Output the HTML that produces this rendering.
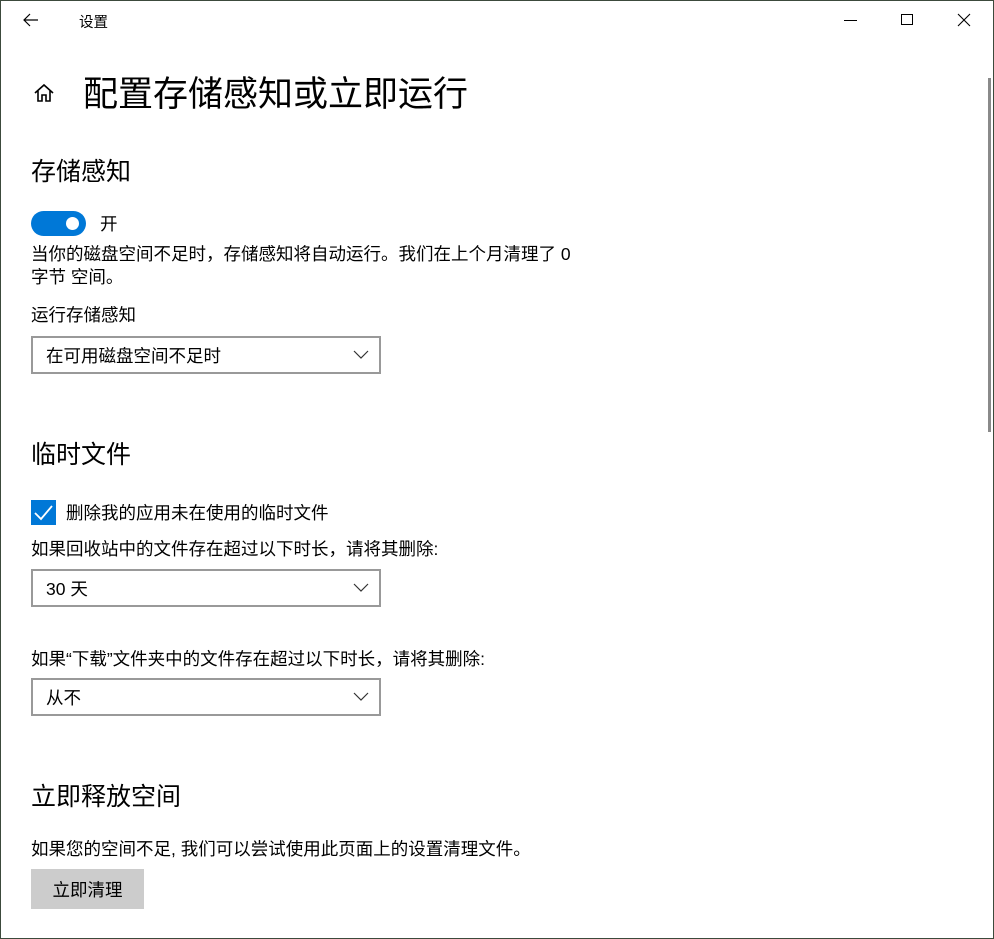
<!DOCTYPE html>
<html><head><meta charset="utf-8"><style>
*{margin:0;padding:0;box-sizing:border-box}
body{width:994px;height:939px;background:#fff;position:relative;overflow:hidden;font-family:"Liberation Sans","Noto Sans CJK SC",sans-serif;color:#000}
.frame{position:absolute;inset:0;border:1px solid #3c4a3c;pointer-events:none}
.a{position:absolute;white-space:nowrap}
.h{font-size:25px}
.t{font-size:17.5px}
.dd{position:absolute;left:31px;width:350px;height:38px;border:2px solid #999;font-size:17.5px;padding:5px 0 0 13px}
.dd svg{position:absolute;right:10px;top:12px}
</style></head><body>
<div class="frame"></div>
<svg class="a" style="left:22px;top:12px" width="18" height="16" viewBox="0 0 18 16"><path d="M16 8H2M8 2L2 8l6 6" fill="none" stroke="#000" stroke-width="1.2"/></svg>
<div class="a" style="left:79px;top:11px;font-size:14.5px">设置</div>
<div class="a" style="left:844px;top:20px;width:13px;height:1px;background:#000"></div>
<div class="a" style="left:901px;top:14px;width:12px;height:11px;border:1px solid #000"></div>
<svg class="a" style="left:957px;top:13px" width="14" height="14" viewBox="0 0 14 14"><path d="M1 1L13 13M13 1L1 13" stroke="#000" stroke-width="1.1"/></svg>
<svg class="a" style="left:33px;top:82px" width="22" height="22" viewBox="0 0 22 22"><path d="M2 11L11 3l9 8M5 9v10h4v-6h4v6h4V9" fill="none" stroke="#000" stroke-width="1.6"/></svg>
<div class="a" style="left:83px;top:66px;font-size:35px">配置存储感知或立即运行</div>
<div class="a h" style="left:31px;top:152px">存储感知</div>
<div class="a" style="left:31px;top:211px;width:55px;height:25px;border-radius:13px;background:#0078d7"></div>
<div class="a" style="left:66px;top:217px;width:13px;height:13px;border-radius:50%;background:#fff"></div>
<div class="a t" style="left:100px;top:211px">开</div>
<div class="a t" style="left:31px;top:243px;line-height:23px">当你的磁盘空间不足时，存储感知将自动运行。我们在上个月清理了 0<br>字节 空间。</div>
<div class="a t" style="left:31px;top:302px">运行存储感知</div>
<div class="dd" style="top:336px">在可用磁盘空间不足时<svg width="16" height="10" viewBox="0 0 16 10"><path d="M1 1l7 7 7-7" fill="none" stroke="#333" stroke-width="1.2"/></svg></div>
<div class="a h" style="left:31px;top:435px">临时文件</div>
<div class="a" style="left:31px;top:500px;width:25px;height:25px;background:#0078d7"></div>
<svg class="a" style="left:33px;top:503px" width="21" height="19" viewBox="0 0 21 19"><path d="M2 10l6 6L19 3" fill="none" stroke="#fff" stroke-width="1.8"/></svg>
<div class="a t" style="left:66px;top:500px">删除我的应用未在使用的临时文件</div>
<div class="a t" style="left:31px;top:536px">如果回收站中的文件存在超过以下时长，请将其删除:</div>
<div class="dd" style="top:569px">30 天<svg width="16" height="10" viewBox="0 0 16 10"><path d="M1 1l7 7 7-7" fill="none" stroke="#333" stroke-width="1.2"/></svg></div>
<div class="a t" style="left:31px;top:646px">如果“下载”文件夹中的文件存在超过以下时长，请将其删除:</div>
<div class="dd" style="top:678px">从不<svg width="16" height="10" viewBox="0 0 16 10"><path d="M1 1l7 7 7-7" fill="none" stroke="#333" stroke-width="1.2"/></svg></div>
<div class="a h" style="left:31px;top:777px">立即释放空间</div>
<div class="a t" style="left:31px;top:836px">如果您的空间不足, 我们可以尝试使用此页面上的设置清理文件。</div>
<div class="a t" style="left:31px;top:869px;width:113px;height:40px;background:#ccc;padding-top:8px;text-align:center">立即清理</div>
<div class="a" style="left:988px;top:78px;width:3px;height:354px;background:#8a8a8a"></div>
</body></html>
